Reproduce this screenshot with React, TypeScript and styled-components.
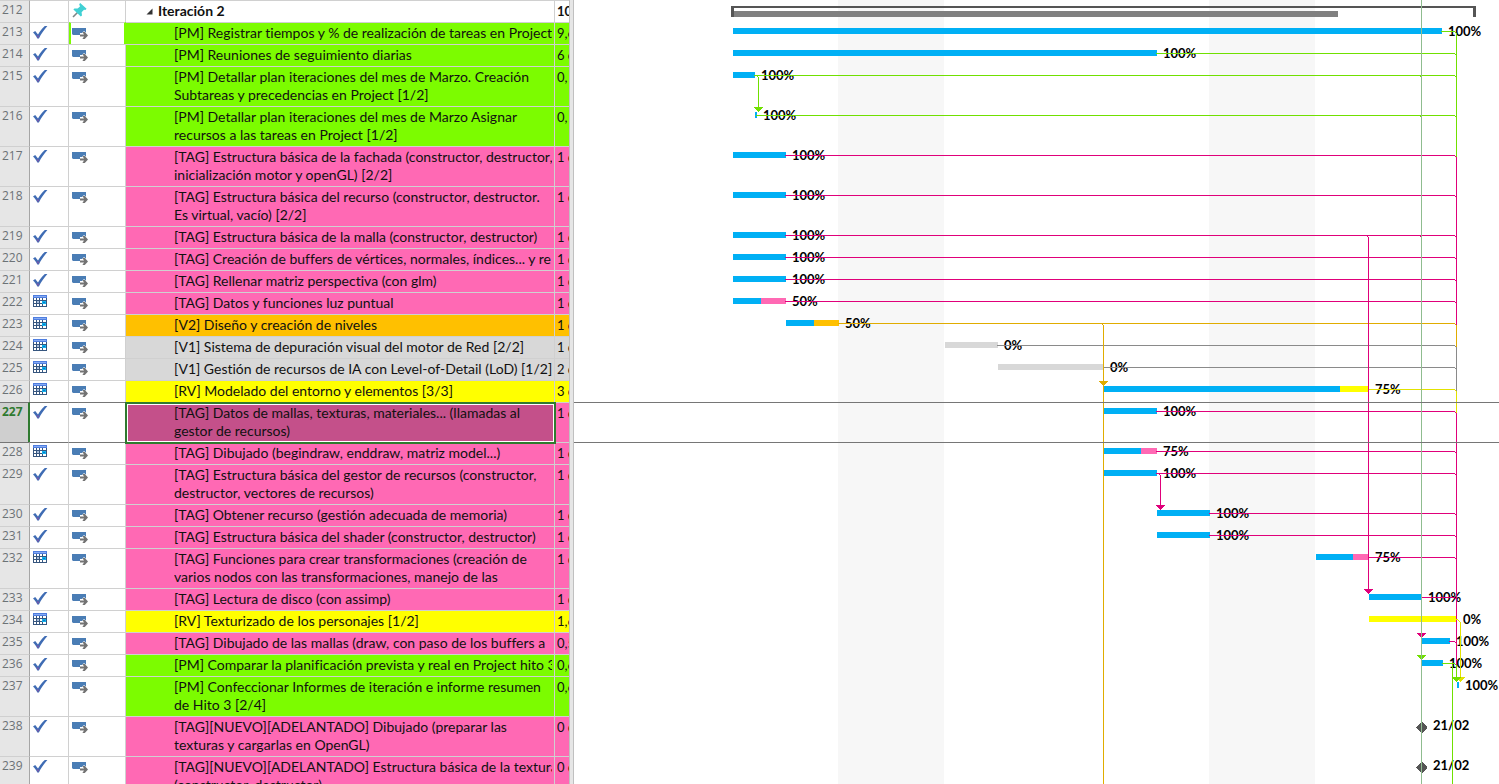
import React from "react";
import styled, { createGlobalStyle } from "styled-components";

const GlobalStyle = createGlobalStyle`
  *, *::before, *::after { box-sizing: border-box; }
  body { margin: 0; background: #fff; overflow: hidden; }
`;

const palette = {
  lime: "#7cfc00",
  pink: "#ff69b4",
  amber: "#ffc000",
  silver: "#d8d8d8",
  yellow: "#ffff00",
  white: "#ffffff",
  done: "#00b0f5",
};
type Tone = keyof typeof palette;

const linkColor = {
  lime: "#70e000",
  pink: "#e0007a",
  amber: "#e0ac00",
  silver: "#8a8a8a",
  yellow: "#e2e200",
};

type Status = "done" | "calendar" | "none";

interface Task {
  id: number;
  lines: string[];
  tone: Tone;
  duration: string;
  status: Status;
  tall?: boolean;
  bar?: [start: number, progress: number, end: number];
  label?: string;
  milestone?: boolean;
  linked?: boolean;
}

const tasks: Task[] = [
  { id: 212, lines: ["Iteración 2"], tone: "white", duration: "10", status: "none" },
  { id: 213, lines: ["[PM] Registrar tiempos y % de realización de tareas en Project"], tone: "lime", duration: "9,6", status: "done", bar: [159, 868, 868], label: "100%", linked: true },
  { id: 214, lines: ["[PM] Reuniones de seguimiento diarias"], tone: "lime", duration: "6 d", status: "done", bar: [159, 583, 583], label: "100%", linked: true },
  { id: 215, lines: ["[PM] Detallar plan iteraciones del mes de Marzo. Creación", "Subtareas y precedencias en Project [1/2]"], tone: "lime", duration: "0,", status: "done", tall: true, bar: [159, 181, 181], label: "100%", linked: true },
  { id: 216, lines: ["[PM] Detallar plan iteraciones del mes de Marzo Asignar", "recursos a las tareas en Project [1/2]"], tone: "lime", duration: "0,", status: "done", tall: true, bar: [181, 183, 183], label: "100%", linked: true },
  { id: 217, lines: ["[TAG] Estructura básica de la fachada (constructor, destructor,", "inicialización motor y openGL) [2/2]"], tone: "pink", duration: "1 d", status: "done", tall: true, bar: [159, 212, 212], label: "100%", linked: true },
  { id: 218, lines: ["[TAG] Estructura básica del recurso (constructor, destructor.", "Es virtual, vacío) [2/2]"], tone: "pink", duration: "1 d", status: "done", tall: true, bar: [159, 212, 212], label: "100%", linked: true },
  { id: 219, lines: ["[TAG] Estructura básica de la malla (constructor, destructor)"], tone: "pink", duration: "1 d", status: "done", bar: [159, 212, 212], label: "100%", linked: true },
  { id: 220, lines: ["[TAG] Creación de buffers de vértices, normales, índices... y re"], tone: "pink", duration: "1 d", status: "done", bar: [159, 212, 212], label: "100%", linked: true },
  { id: 221, lines: ["[TAG] Rellenar matriz perspectiva (con glm)"], tone: "pink", duration: "1 d", status: "done", bar: [159, 212, 212], label: "100%", linked: true },
  { id: 222, lines: ["[TAG] Datos y funciones luz puntual"], tone: "pink", duration: "1 d", status: "calendar", bar: [159, 187, 212], label: "50%", linked: true },
  { id: 223, lines: ["[V2] Diseño y creación de niveles"], tone: "amber", duration: "1 d", status: "calendar", bar: [212, 240, 265], label: "50%", linked: true },
  { id: 224, lines: ["[V1] Sistema de depuración visual del motor de Red [2/2]"], tone: "silver", duration: "1 d", status: "calendar", bar: [371, 371, 424], label: "0%", linked: true },
  { id: 225, lines: ["[V1] Gestión de recursos de IA con Level-of-Detail (LoD) [1/2]"], tone: "silver", duration: "2 d", status: "calendar", bar: [424, 424, 530], label: "0%", linked: true },
  { id: 226, lines: ["[RV] Modelado del entorno y elementos [3/3]"], tone: "yellow", duration: "3 d", status: "calendar", bar: [530, 766, 795], label: "75%", linked: true },
  { id: 227, lines: ["[TAG] Datos de mallas, texturas, materiales... (llamadas al", "gestor de recursos)"], tone: "pink", duration: "1 d", status: "done", tall: true, bar: [530, 583, 583], label: "100%", linked: true },
  { id: 228, lines: ["[TAG] Dibujado (begindraw, enddraw, matriz model...)"], tone: "pink", duration: "1 d", status: "calendar", bar: [530, 567, 583], label: "75%", linked: true },
  { id: 229, lines: ["[TAG] Estructura básica del gestor de recursos (constructor,", "destructor, vectores de recursos)"], tone: "pink", duration: "1 d", status: "done", tall: true, bar: [530, 583, 583], label: "100%", linked: true },
  { id: 230, lines: ["[TAG] Obtener recurso (gestión adecuada de memoria)"], tone: "pink", duration: "1 d", status: "done", bar: [583, 636, 636], label: "100%", linked: true },
  { id: 231, lines: ["[TAG] Estructura básica del shader (constructor, destructor)"], tone: "pink", duration: "1 d", status: "done", bar: [583, 636, 636], label: "100%", linked: true },
  { id: 232, lines: ["[TAG] Funciones para crear transformaciones (creación de", "varios nodos con las transformaciones, manejo de las"], tone: "pink", duration: "1 d", status: "calendar", tall: true, bar: [742, 779, 795], label: "75%", linked: true },
  { id: 233, lines: ["[TAG] Lectura de disco (con assimp)"], tone: "pink", duration: "1 d", status: "done", bar: [795, 848, 848], label: "100%", linked: true },
  { id: 234, lines: ["[RV] Texturizado de los personajes [1/2]"], tone: "yellow", duration: "1,6", status: "calendar", bar: [795, 795, 883], label: "0%" },
  { id: 235, lines: ["[TAG] Dibujado de las mallas (draw, con paso de los buffers a"], tone: "pink", duration: "0,5", status: "done", bar: [848, 876, 876], label: "100%", linked: true },
  { id: 236, lines: ["[PM] Comparar la planificación prevista y real en Project hito 3"], tone: "lime", duration: "0,6", status: "done", bar: [848, 869, 869], label: "100%", linked: true },
  { id: 237, lines: ["[PM] Confeccionar Informes de iteración e informe resumen", "de Hito 3 [2/4]"], tone: "lime", duration: "0,6", status: "done", tall: true, bar: [883, 885, 885], label: "100%" },
  { id: 238, lines: ["[TAG][NUEVO][ADELANTADO] Dibujado (preparar las", "texturas y cargarlas en OpenGL)"], tone: "pink", duration: "0 d", status: "done", tall: true, milestone: true, label: "21/02" },
  { id: 239, lines: ["[TAG][NUEVO][ADELANTADO] Estructura básica de la textura", "(constructor, destructor)"], tone: "pink", duration: "0 d", status: "done", tall: true, milestone: true, label: "21/02" },
];

const SELECTED = 227;
const SUMMARY = 212;
const ROW = 22;
const TALL_ROW = 40;

const rowTops: Record<number, number> = {};
let chartHeight = 0;
for (const task of tasks) {
  rowTops[task.id] = chartHeight;
  chartHeight += task.tall ? TALL_ROW : ROW;
}

/* ---------- layout ---------- */

const Workspace = styled.main`
  display: flex;
  height: 100vh;
  overflow: hidden;
  background: #fff;
  color: #111;
  font-family: Lato, "Open Sans", sans-serif;
  font-size: 14px;
  font-variant-ligatures: none;
`;

const SheetPane = styled.section`
  flex: none;
  overflow: hidden;
`;

const Splitter = styled.div`
  flex: none;
  width: 5px;
  background: #e6e6e6;
  border-left: 1px solid #c0c0c0;
  border-right: 1px solid #c0c0c0;
`;

const ChartPane = styled.section`
  flex: 1;
  min-width: 0;
  overflow: hidden;
`;

/* ---------- task sheet ---------- */

const Sheet = styled.table`
  width: 569px;
  table-layout: fixed;
  border-collapse: separate;
  border-spacing: 0;
`;

const Col = styled.col<{ $width: number }>`
  width: ${(p) => p.$width}px;
`;

const Row = styled.tr<{ $tall?: boolean }>`
  height: ${(p) => (p.$tall ? TALL_ROW : ROW)}px;
`;

const Cell = styled.td<{ $edge?: boolean }>`
  padding: 0;
  vertical-align: top;
  overflow: hidden;
  border-top: 1px solid ${(p) => (p.$edge ? "#767676" : "#d0d0d0")};
  border-right: 1px solid #d0d0d0;
`;

const IdCell = styled.th<{ $selected: boolean; $edge: boolean }>`
  padding: 1px 0 0 2px;
  vertical-align: top;
  text-align: left;
  overflow: hidden;
  font-family: "Open Sans", "Noto Sans", sans-serif;
  font-size: 12px;
  line-height: 16px;
  font-weight: ${(p) => (p.$selected ? 700 : 400)};
  color: ${(p) => (p.$selected ? "#2f7a2f" : "#6c7276")};
  background: ${(p) => (p.$selected ? "#cfcfcf" : "#e6e6e6")};
  border-top: 1px solid ${(p) => (p.$edge ? "#767676" : "#d0d0d0")};
  border-right: ${(p) => (p.$selected ? "2px solid #2f7a2f" : "1px solid #a6a6a6")};
`;

const StatusCell = styled(Cell)`
  padding: 2px 0 0 3px;
`;

const ModeCell = styled(Cell)<{ $marked: boolean }>`
  padding: 2px 0 0 ${(p) => (p.$marked ? 1 : 3)}px;
  ${(p) =>
    p.$marked &&
    `border-left: 2px solid ${palette.lime};
     border-right: 2px solid ${palette.lime};`}
`;

const NameCell = styled(Cell)<{ $tone: Tone; $selected: boolean }>`
  position: relative;
  padding: 1px 2px 0 48px;
  background: ${(p) => (p.$selected ? "#c4508a" : palette[p.$tone])};
  ${(p) =>
    p.$selected &&
    `overflow: visible;
     &::after {
       content: "";
       position: absolute;
       inset: -1px -2px -2px -1px;
       border: 2px solid #2f7a2f;
       box-shadow: inset 0 0 0 1px #fff;
       z-index: 1;
     }`}
`;

const SummaryCell = styled(NameCell)`
  padding-left: 20px;
`;

const DurationCell = styled(Cell)<{ $tone: Tone; $bold: boolean }>`
  padding: 1px 0 0 2px;
  border-right: 0;
  background: ${(p) => palette[p.$tone]};
  font-size: 13px;
  font-weight: ${(p) => (p.$bold ? 700 : 400)};
`;

const CellText = styled.div<{ $tall?: boolean }>`
  height: ${(p) => (p.$tall ? 36 : 18)}px;
  line-height: 18px;
  white-space: pre;
  overflow: hidden;
`;

const SummaryText = styled(CellText)`
  display: flex;
  align-items: center;
  font-weight: 700;
`;

const CollapseButton = styled.button`
  display: flex;
  width: 12px;
  padding: 0;
  border: 0;
  background: none;
`;

const Icon = styled.svg`
  display: block;
`;

const CheckIcon = () => (
  <Icon width="16" height="16" viewBox="0 0 16 16" role="img" aria-label="Completada">
    <path d="M0 7.6 L2.2 6 L5 9.4 C7 6 9.4 3.2 11.8 1 H14.4 C11 4.8 8.2 8.8 5.9 13.4 H4.3 C3.2 11.2 1.8 9.4 0 7.6Z" fill="#3f6cb4" />
    <path d="M3.4 9.6 L5.2 11 L6.4 9.8 L5.5 12.8 L4.6 12.8Z" fill="#7a55a8" />
  </Icon>
);

const CalendarIcon = () => (
  <Icon width="16" height="16" viewBox="0 0 16 16" shapeRendering="crispEdges" role="img" aria-label="Programada">
    <rect x="0" y="0" width="14" height="12" fill="#36567f" />
    <rect x="0" y="0" width="14" height="3" fill="#4f7ee0" />
    <rect x="1" y="1" width="12" height="1" fill="#86aaf2" />
    {[3, 6, 9].map((y) =>
      [1, 4, 7, 10].map((x) => <rect key={`${x}-${y}`} x={x} y={y} width={x === 10 ? 3 : 2} height="2" fill="#fff" />)
    )}
    <rect x="4" y="6" width="2" height="2" fill="#a9bddb" />
    <rect x="9" y="6" width="4" height="3" fill="#12b4ee" />
    <rect x="10" y="7" width="2" height="1" fill="#0a78c8" />
  </Icon>
);

const AutoIcon = () => (
  <Icon width="18" height="17" viewBox="0 0 18 17" role="img" aria-label="Programación automática">
    <path d="M0 3H14V8H8V10H1L0 9Z" fill="#4a7db5" />
    <path d="M8 10.5H13M11 7L14.8 10.5L11 14" fill="none" stroke="#fff" strokeWidth="3" />
    <path d="M8 9.5H12L10.4 7H12.8L16 10.5L12.8 14H10.4L12 11.5H8Z" fill="#737373" />
  </Icon>
);

const PinIcon = () => (
  <Icon width="18" height="17" viewBox="0 0 18 17" role="img" aria-label="Programación manual">
    <path d="M1 14L6 9" stroke="#7d8585" strokeWidth="1.6" />
    <path d="M8.2 0L14.6 5.8L13.4 7L12 6.8L9.6 9.2L10 12.6L8.8 13.4L1.4 6.6L2.4 5.4L5.6 5.6L8 3.4L7.2 1.2Z" fill="#40d0d4" />
  </Icon>
);

/* ---------- chart ---------- */

const ChartSvg = styled.svg`
  display: block;
  width: 100%;
  height: ${chartHeight}px;
`;

const ChartLabel = styled.text`
  font-size: 13px;
  font-weight: 700;
  fill: #000;
`;

const DAY = 53;
const FIRST_DAY = 159;
const WEEKENDS = [2, 9];
const TODAY = 847;
const TRUNK = 882;

type LinkTone = keyof typeof linkColor;

const VLine = ({ x, from, to, tone }: { x: number; from: number; to: number; tone: LinkTone }) => (
  <rect x={x} y={from} width={1} height={to - from} fill={linkColor[tone]} />
);

const Arrow = ({ x, y, tone }: { x: number; y: number; tone: LinkTone }) => (
  <path d={`M${x - 4} ${y}h9v1h-1v1h-1v1h-1v1h-1v1h-1v-1h-1v-1h-1v-1h-1v-1h-1z`} fill={linkColor[tone]} />
);

const Notch = ({ x, id, tone }: { x: number; id: number; tone: LinkTone }) => (
  <rect x={x - 1} y={rowTops[id] + 10} width={1} height={1} fill={linkColor[tone]} />
);

const TaskBar = ({ task }: { task: Task }) => {
  if (!task.bar) return null;
  const [start, progress, end] = task.bar;
  const y = rowTops[task.id] + 6;
  return (
    <g>
      <rect x={start} y={y} width={end - start} height={6} fill={palette[task.tone]} />
      <rect x={start} y={y} width={progress - start} height={6} fill={palette.done} />
      <ChartLabel x={end + 6} y={y + 8}>{task.label}</ChartLabel>
    </g>
  );
};

const Milestone = ({ task }: { task: Task }) => {
  const y = rowTops[task.id] + 11;
  return (
    <g>
      <path d={`M${TODAY} ${y - 5}h1l5 5v1l-5 5h-1l-5 -5v-1z`} fill="#555" />
      <ChartLabel x={859} y={y + 3}>{task.label}</ChartLabel>
    </g>
  );
};

const GanttChart = () => {
  const t = rowTops;
  return (
    <ChartSvg shapeRendering="crispEdges" role="img" aria-label="Diagrama de Gantt de la Iteración 2">
      {WEEKENDS.map((d) => (
        <rect key={d} x={FIRST_DAY + d * DAY - 1} y={0} width={2 * DAY} height={chartHeight} fill="#f7f7f7" />
      ))}
      <path d="M157 6H902V17H899V8H160V17H157Z" fill="#555" />
      <rect x={160} y={11} width={604} height={6} fill="#808080" />

      {tasks.map((task) => (task.milestone ? <Milestone key={task.id} task={task} /> : <TaskBar key={task.id} task={task} />))}

      {tasks.filter((task) => task.linked && task.bar).map((task) => (
        <g key={task.id}>
          <rect
            x={task.bar![2] - 1}
            y={t[task.id] + 9}
            width={TRUNK - task.bar![2]}
            height={1}
            fill={linkColor[task.tone as LinkTone]}
          />
          <Notch x={TRUNK} id={task.id} tone={task.tone as LinkTone} />
        </g>
      ))}

      <VLine x={TRUNK} from={t[213] + 11} to={t[217] + 11} tone="lime" />
      <VLine x={TRUNK} from={t[217] + 11} to={t[223] + 11} tone="pink" />
      <VLine x={TRUNK} from={t[223] + 11} to={t[224] + 11} tone="amber" />
      <VLine x={TRUNK} from={t[224] + 11} to={t[226] + 11} tone="silver" />
      <VLine x={TRUNK} from={t[226] + 11} to={t[227] + 11} tone="yellow" />
      <VLine x={TRUNK} from={t[227] + 11} to={t[236] + 11} tone="pink" />
      <VLine x={TRUNK} from={t[236] + 11} to={t[237] + 1} tone="lime" />
      <VLine x={878} from={t[236] + 11} to={chartHeight} tone="lime" />

      <path d={`M882 ${t[234] + 9}h2v1h1v1h1v1h1v${t[237] - t[234] - 11}h-1v-${t[237] - t[234] - 11}h-1v-1h-1v-1h-2z`} fill={linkColor.yellow} />
      <Arrow x={886} y={t[237] + 1} tone="yellow" />
      <Arrow x={TRUNK} y={t[237] + 1} tone="lime" />

      <Notch x={184} id={215} tone="lime" />
      <VLine x={184} from={t[215] + 11} to={t[216] + 1} tone="lime" />
      <Arrow x={184} y={t[216] + 1} tone="lime" />

      <Notch x={529} id={223} tone="amber" />
      <VLine x={529} from={t[223] + 11} to={chartHeight} tone="amber" />
      <Arrow x={529} y={t[226] + 1} tone="amber" />

      <Notch x={586} id={229} tone="pink" />
      <VLine x={586} from={t[229] + 11} to={t[230] + 1} tone="pink" />
      <Arrow x={586} y={t[230] + 1} tone="pink" />

      <Notch x={794} id={219} tone="pink" />
      <VLine x={794} from={t[219] + 11} to={t[233] + 1} tone="pink" />
      <Arrow x={794} y={t[233] + 1} tone="pink" />

      <Notch x={TODAY} id={215} tone="lime" />
      <Notch x={TODAY} id={216} tone="lime" />
      <Notch x={TODAY} id={219} tone="pink" />
      <Arrow x={TODAY} y={t[235] + 1} tone="pink" />
      <Arrow x={TODAY} y={t[236] + 1} tone="lime" />
      <rect x={TODAY} y={0} width={1} height={chartHeight} fill="#8fbc8f" />

      <rect x={0} y={t[SELECTED]} width="100%" height={1} fill="#767676" />
      <rect x={0} y={t[SELECTED + 1]} width="100%" height={1} fill="#767676" />
    </ChartSvg>
  );
};

const TaskRow = ({ task }: { task: Task }) => {
  const selected = task.id === SELECTED;
  const edge = selected || task.id === SELECTED + 1;
  const summary = task.id === SUMMARY;
  return (
    <Row $tall={task.tall}>
      <IdCell scope="row" $selected={selected} $edge={edge}>{task.id}</IdCell>
      <StatusCell $edge={edge}>
        {task.status === "done" && <CheckIcon />}
        {task.status === "calendar" && <CalendarIcon />}
      </StatusCell>
      <ModeCell $edge={edge} $marked={task.id === 213}>{summary ? <PinIcon /> : <AutoIcon />}</ModeCell>
      {summary ? (
        <SummaryCell $tone={task.tone} $selected={false}>
          <SummaryText>
            <CollapseButton type="button" aria-label="Contraer Iteración 2">
              <svg width="7" height="7" viewBox="0 0 7 7" aria-hidden="true">
                <path d="M6.5 0.5V6.5H0.5Z" fill="#333" />
              </svg>
            </CollapseButton>
            {task.lines[0]}
          </SummaryText>
        </SummaryCell>
      ) : (
        <NameCell $tone={task.tone} $selected={selected}>
          <CellText $tall={task.tall}>{task.lines.join("\n")}</CellText>
        </NameCell>
      )}
      <DurationCell $tone={task.tone} $bold={summary}>
        <CellText>{task.duration}</CellText>
      </DurationCell>
    </Row>
  );
};

export default function App() {
  return (
    <>
      <GlobalStyle />
      <Workspace>
        <SheetPane>
          <Sheet>
            <colgroup>
              <Col $width={30} />
              <Col $width={39} />
              <Col $width={57} />
              <Col $width={429} />
              <Col $width={14} />
            </colgroup>
            <tbody>
              {tasks.map((task) => (
                <TaskRow key={task.id} task={task} />
              ))}
            </tbody>
          </Sheet>
        </SheetPane>
        <Splitter role="separator" aria-orientation="vertical" />
        <ChartPane>
          <GanttChart />
        </ChartPane>
      </Workspace>
    </>
  );
}
